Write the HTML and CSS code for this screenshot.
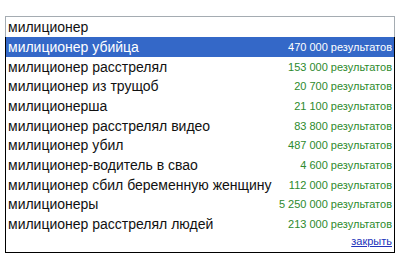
FILE: index.html
```html
<!DOCTYPE html>
<html>
<head>
    <meta charset="UTF-8">
    <title>Подсказки</title>
    <link rel="stylesheet" href="styles.css">
</head>
<body>
    <div class="suggest">
        <input type="text" class="query" value="милиционер">
        <table class="list">
            <tr class="selected"><td class="term">милиционер убийца</td><td class="count">470 000 результатов</td></tr>
            <tr><td class="term">милиционер расстрелял</td><td class="count">153 000 результатов</td></tr>
            <tr><td class="term">милиционер из трущоб</td><td class="count">20 700 результатов</td></tr>
            <tr><td class="term">милиционерша</td><td class="count">21 100 результатов</td></tr>
            <tr><td class="term">милиционер расстрелял видео</td><td class="count">83 800 результатов</td></tr>
            <tr><td class="term">милиционер убил</td><td class="count">487 000 результатов</td></tr>
            <tr><td class="term">милиционер-водитель в свао</td><td class="count">4 600 результатов</td></tr>
            <tr><td class="term">милиционер сбил беременную женщину</td><td class="count">112 000 результатов</td></tr>
            <tr><td class="term">милиционеры</td><td class="count">5 250 000 результатов</td></tr>
            <tr><td class="term">милиционер расстрелял людей</td><td class="count">213 000 результатов</td></tr>
            <tr><td class="close" colspan="2"><a href="#">закрыть</a></td></tr>
        </table>
    </div>
</body>
</html>
```

FILE: styles.css
```css
body {
    margin: 0;
    background-color: #fff;
    font-family: Arial, "Liberation Sans", sans-serif;
}

.suggest {
    width: 390px;
    padding: 16px 0 0 5px;
}

.query {
    display: block;
    width: 390px;
    height: 21px;
    margin: 0;
    padding: 0 2px;
    border: 1px solid #a5acb2;
    border-bottom: none;
    box-sizing: border-box;
    font-family: Arial, "Liberation Sans", sans-serif;
    font-size: 14px;
    color: #111;
    outline: none;
}

.list {
    width: 390px;
    border: 1px solid #000;
    border-top: none;
    border-collapse: collapse;
    box-sizing: border-box;
}

.list td {
    height: 19.7px;
    padding: 0 2px 0 2px;
    white-space: nowrap;
    font-size: 14px;
    color: #111;
}

.list .count {
    text-align: right;
    font-size: 11px;
    color: #2d8a2d;
}

.selected td {
    background-color: #3468c8;
    color: #fff;
}

.selected .count {
    color: #fff;
}

.list .close {
    height: 17px;
    padding-top: 1px;
    text-align: right;
    font-size: 11px;
    vertical-align: top;
}

.close a {
    color: #2233bb;
}
```
